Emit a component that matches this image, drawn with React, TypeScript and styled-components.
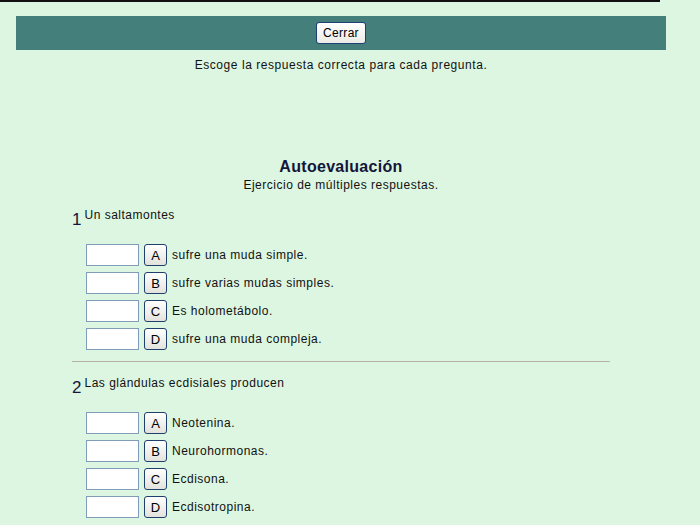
import React from "react";
import styled, { createGlobalStyle } from "styled-components";

const Global = createGlobalStyle`
  html, body { margin: 0; padding: 0; background: #ddf6e1; }
  body { font-family: "Liberation Sans", Arial, sans-serif; font-size: 12px; color: #111; }
`;

const TopLine = styled.div`
  width: 660px;
  height: 2px;
  background: #111;
`;

const Page = styled.div`
  width: 650px;
  margin-left: 16px;
  padding-top: 14px;
`;

const Header = styled.div`
  height: 34px;
  background: #447f7c;
  display: flex;
  align-items: center;
  justify-content: center;
`;

const CloseButton = styled.button`
  font-family: "Liberation Sans", Arial, sans-serif;
  font-size: 12px;
  height: 22px;
  padding: 0 6px;
  border: 1px solid #1c3f7a;
  border-radius: 3px;
  background: linear-gradient(#ffffff, #ecebe5);
  color: #000;
  letter-spacing: 0.3px;
`;

const Instruction = styled.p`
  margin: 8px 0 0;
  text-align: center;
  letter-spacing: 0.55px;
`;

const Section = styled.div`
  padding: 0 56px;
  margin-top: 85px;
`;

const Title = styled.h1`
  margin: 0;
  text-align: center;
  font-size: 16px;
  font-weight: bold;
  color: #13153a;
  letter-spacing: 0.3px;
  line-height: 19px;
`;

const Subtitle = styled.div`
  margin-top: 2px;
  text-align: center;
  letter-spacing: 0.5px;
  line-height: 15px;
`;

const Question = styled.div<{ $first?: boolean }>`
  display: flex;
  align-items: flex-start;
  margin-top: ${(p) => (p.$first ? "15px" : "14px")};
  height: 20px;
`;

const Num = styled.span`
  font-size: 17px;
  color: #13153a;
  line-height: 20px;
  margin-top: 2px;
  margin-right: 3px;
`;

const QText = styled.span`
  letter-spacing: 0.5px;
  line-height: 14px;
`;

const Options = styled.div`
  margin-top: 16px;
  padding-left: 14px;
  display: flex;
  flex-direction: column;
  gap: 6px;
`;

const Row = styled.div`
  display: flex;
  align-items: center;
  height: 22px;
`;

const Box = styled.input`
  width: 53px;
  height: 22px;
  box-sizing: border-box;
  border: 1px solid #7f9db9;
  background: #fff;
  margin: 0 5px 0 0;
  padding: 0;
`;

const Letter = styled.button`
  width: 23px;
  height: 22px;
  box-sizing: border-box;
  padding: 0;
  border: 1px solid #1f3f6e;
  border-radius: 3px;
  background: linear-gradient(#ffffff, #e3e2dc);
  font-family: "Liberation Sans", Arial, sans-serif;
  font-size: 13px;
  color: #000;
  margin-right: 5px;
`;

const OptText = styled.span`
  letter-spacing: 0.5px;
`;

const Rule = styled.hr`
  margin: 11px 0 0;
  border: 0;
  height: 1px;
  background: #b9b3a5;
`;

const questions = [
  {
    n: 1,
    q: "Un saltamontes",
    opts: [
      "sufre una muda simple.",
      "sufre varias mudas simples.",
      "Es holometábolo.",
      "sufre una muda compleja.",
    ],
  },
  {
    n: 2,
    q: "Las glándulas ecdisiales producen",
    opts: ["Neotenina.", "Neurohormonas.", "Ecdisona.", "Ecdisotropina."],
  },
];

export default function App() {
  return (
    <>
      <Global />
      <TopLine />
      <Page>
        <Header>
          <CloseButton>Cerrar</CloseButton>
        </Header>
        <Instruction>Escoge la respuesta correcta para cada pregunta.</Instruction>
        <Section>
          <Title>Autoevaluación</Title>
          <Subtitle>Ejercicio de múltiples respuestas.</Subtitle>
          {questions.map((qq, i) => (
            <React.Fragment key={qq.n}>
              {i > 0 && <Rule />}
              <Question $first={i === 0}>
                <Num>{qq.n}</Num>
                <QText>{qq.q}</QText>
              </Question>
              <Options>
                {qq.opts.map((o, j) => (
                  <Row key={j}>
                    <Box type="text" />
                    <Letter>{"ABCD"[j]}</Letter>
                    <OptText>{o}</OptText>
                  </Row>
                ))}
              </Options>
            </React.Fragment>
          ))}
        </Section>
      </Page>
    </>
  );
}
